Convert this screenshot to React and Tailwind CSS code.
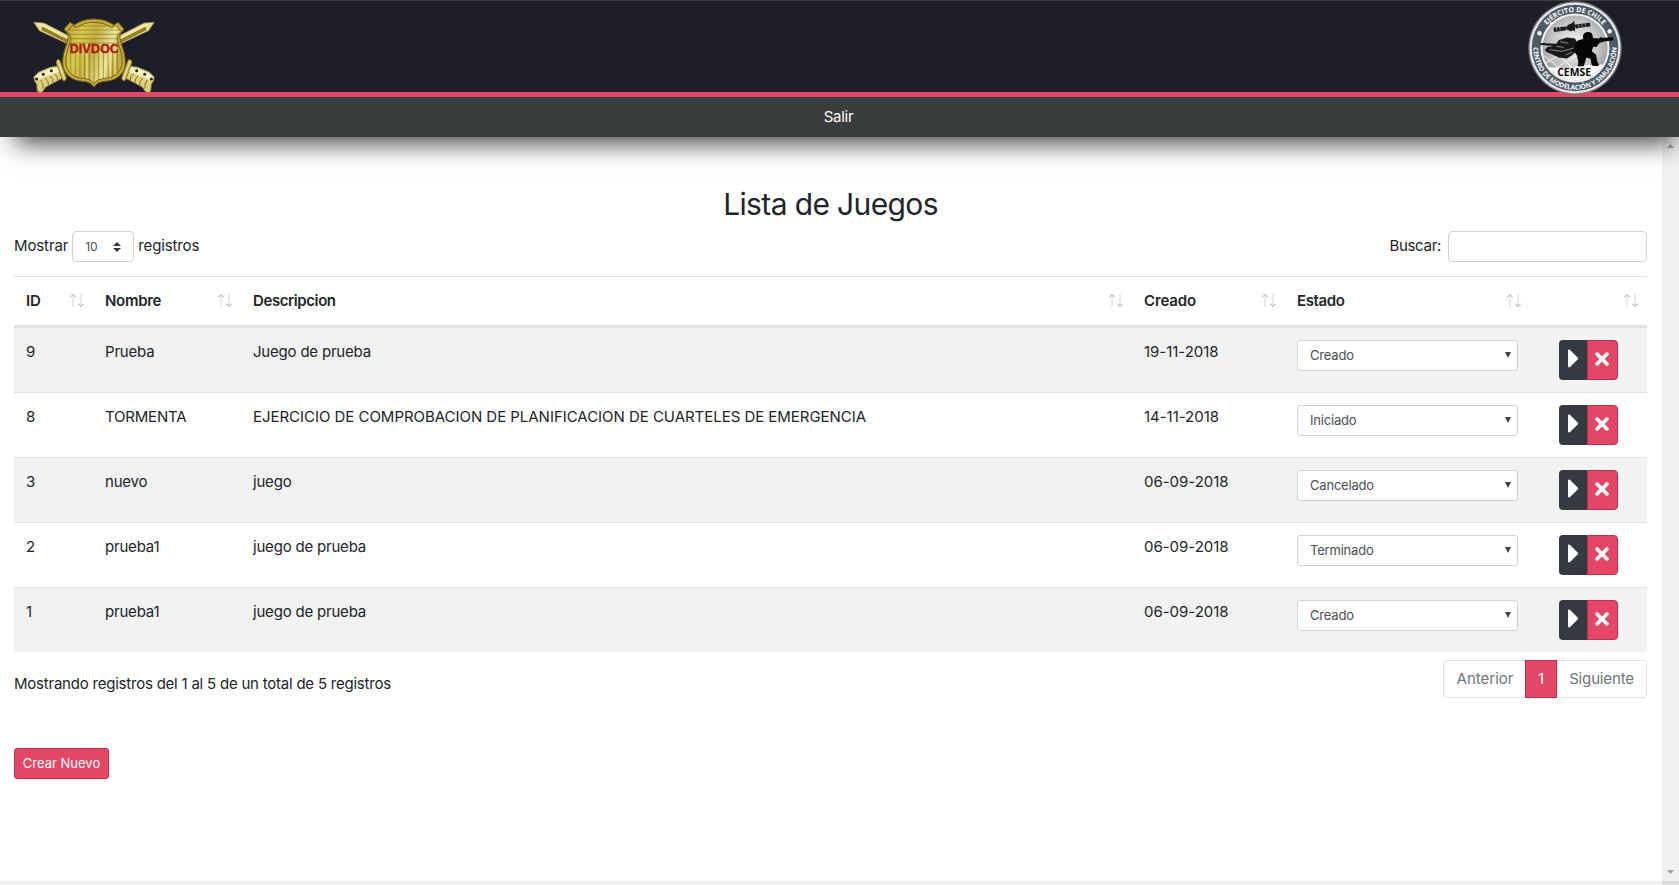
import { FaCaretRight, FaTimes } from "react-icons/fa";

const rows = [
  { id: "9", nombre: "Prueba", desc: "Juego de prueba", creado: "19-11-2018", estado: "Creado" },
  {
    id: "8",
    nombre: "TORMENTA",
    desc: "EJERCICIO DE COMPROBACION DE PLANIFICACION DE CUARTELES DE EMERGENCIA",
    creado: "14-11-2018",
    estado: "Iniciado",
    descClass: "tracking-[-0.035px]",
  },
  { id: "3", nombre: "nuevo", desc: "juego", creado: "06-09-2018", estado: "Cancelado" },
  { id: "2", nombre: "prueba1", desc: "juego de prueba", creado: "06-09-2018", estado: "Terminado" },
  { id: "1", nombre: "prueba1", desc: "juego de prueba", creado: "06-09-2018", estado: "Creado" },
];

const columns = [
  { label: "ID", className: "tracking-[-0.2px]" },
  { label: "Nombre", className: "tracking-[-0.3px]" },
  { label: "Descripcion", className: "tracking-[-0.4px]" },
  { label: "Creado", className: "tracking-[-0.15px]" },
  { label: "Estado", className: "tracking-[-0.4px]" },
  { label: "", className: "" },
];

function Sword() {
  return (
    <g>
      <path d="M101 67 L132 69 L212 110 L208 134 L118 92 Z" fill="#e9dc8c" stroke="#8d8558" strokeWidth="2" />
      <path d="M104 69 L132 72 L210 113 L209 118 L130 82 Z" fill="#f0e7a4" />
      <path d="M128 82 L206 122 L204 128 L126 89 Z" fill="#a98a1c" stroke="#5a4a10" strokeWidth="2" />
      <path
        d="M184 196 L150 202 L116 216 L101 231 L104 244 L110 252 L112 274 L122 278 L130 272 L136 262 L192 232 Z"
        fill="#ddd17a"
        stroke="#8d8558"
        strokeWidth="2"
      />
      <path d="M178 202 L148 206 L118 220 L105 231 L110 242 L140 228 L184 214 Z" fill="#f6f0c6" />
      <path
        d="M122 240 q10 12 7 26 M136 234 q12 12 9 23 M150 228 q12 10 9 22 M164 221 q12 10 9 21"
        fill="none"
        stroke="#6f5d18"
        strokeWidth="2.5"
      />
      <circle cx="154" cy="212" r="4.500" fill="#16331c" />
      <circle cx="130" cy="223" r="4.500" fill="#16331c" />
      <circle cx="110" cy="237" r="4.500" fill="#16331c" />
      <path
        d="M172 179 q6 -3 9 4 L199 232 q1 9 -6 11 q-5 0 -7 -6 L168 188 q0 -6 4 -9 Z"
        fill="#cdbb52"
        stroke="#6b5c1a"
        strokeWidth="2"
      />
      <path d="M174 184 L194 238" stroke="#f5edb5" strokeWidth="3" />
    </g>
  );
}

function DivdocLogo() {
  const shield =
    "M282 57 C255 57 236 66 223 75 L210 67 L192 87 L204 104 C207 126 188 150 188 187 C188 226 220 243 248 244 C264 245 274 250 282 261 C290 250 300 245 316 244 C344 243 376 226 376 187 C376 150 357 126 360 104 L372 87 L354 67 L341 75 C328 66 309 57 282 57 Z";
  return (
    <svg viewBox="96 48 372 234" className="h-[78px] w-[124px] shrink-0">
      <defs>
        <linearGradient id="gold" x1="0" x2="1" y1="0" y2="0.3">
          <stop offset="0" stopColor="#b9a136" />
          <stop offset="0.3" stopColor="#d8c94f" />
          <stop offset="0.55" stopColor="#c3b040" />
          <stop offset="0.85" stopColor="#ede59a" />
          <stop offset="1" stopColor="#c2ac3e" />
        </linearGradient>
        <clipPath id="shieldClip">
          <path d={shield} transform="translate(282 158) scale(0.89) translate(-282 -158)" />
        </clipPath>
      </defs>
      <Sword />
      <g transform="translate(564 0) scale(-1 1)">
        <Sword />
      </g>
      <path d={shield} fill="#c4ab38" stroke="#6e5d1c" strokeWidth="3" />
      <path
        d={shield}
        fill="url(#gold)"
        stroke="#54470f"
        strokeWidth="2.5"
        transform="translate(282 158) scale(0.9) translate(-282 -158)"
      />
      <g clipPath="url(#shieldClip)">
        <path d="M190 78h190M190 90h190M190 103h190M190 116h190M190 129h190" stroke="#85751f" strokeWidth="2" />
        <path
          d="M212 130v130M226 130v130M240 130v130M254 130v130M268 130v130M282 130v130M296 130v130M310 130v130M324 130v130M338 130v130M352 130v130"
          stroke="#85751f"
          strokeWidth="2"
        />
        <path d="M261 130v130M303 130v130M331 130v130M345 130v130" stroke="#eee69a" strokeWidth="3" />
      </g>
      <text
        x="209"
        y="159"
        textLength="148"
        lengthAdjust="spacingAndGlyphs"
        fill="#b5140f"
        stroke="#b5140f"
        strokeWidth="0.8"
        className="font-['Liberation_Sans',sans-serif] text-[37px] font-bold tracking-normal"
      >
        DIVDOC
      </text>
    </svg>
  );
}

function CemseLogo() {
  return (
    <svg viewBox="0 0 280 280" className="h-[94px] w-[94px] shrink-0">
      <defs>
        <radialGradient id="disc" cx="0.5" cy="0.45" r="0.6">
          <stop offset="0" stopColor="#f4f4f4" />
          <stop offset="0.6" stopColor="#c4c5c7" />
          <stop offset="1" stopColor="#8f9194" />
        </radialGradient>
        <clipPath id="discClip">
          <circle cx="140" cy="140" r="97" />
        </clipPath>
        <path id="arcTop" d="M33 140 A107 107 0 0 1 247 140" />
        <path id="arcBottom" d="M18 118 A124 124 0 1 0 262 118" />
      </defs>
      <circle cx="140" cy="140" r="139" fill="#7d8084" />
      <circle cx="140" cy="140" r="135" fill="#e9eaeb" />
      <circle cx="140" cy="140" r="129" fill="#4b5a66" />
      <circle cx="140" cy="140" r="103" fill="#f2f2f2" />
      <circle cx="140" cy="140" r="97" fill="url(#disc)" />
      <g clipPath="url(#discClip)">
        <path d="M44 190 L110 150 M60 214 L150 160 M44 160 L120 220 M80 150 L150 215" stroke="#eeeeee" strokeWidth="3" />
        <path d="M30 190 Q90 206 140 196 T250 190 V250 H30 Z" fill="#fbfbfb" />
      </g>
      <g fill="#16181a">
        <path d="M76 80 L112 76 L114 87 L78 92 Z M140 70 L184 65 L186 75 L142 82 Z" />
        <path d="M112 78 L122 70 L134 64 L141 74 L140 84 L128 90 L116 86 Z" />
        <path d="M134 60 l4 0 l2 30 l-4 0 Z" />
        <path d="M36 127 L40 125 L84 127 L92 116 L116 109 L140 112 L146 122 L142 134 L146 142 L136 158 L116 171 L92 168 L56 152 L50 146 L58 137 L76 134 L38 131 Z" />
      </g>
      <path
        d="M86 88 l-2 -10 M96 87 l-2 -10 M152 79 l-2 -10 M162 78 l-2 -10 M172 76 l-2 -10"
        stroke="#bdbec0"
        strokeWidth="2"
      />
      <path
        d="M64 145 L102 150 L136 140 M96 121 L120 126 M84 135 L106 138 M112 161 L130 153"
        fill="none"
        stroke="#b4b6b8"
        strokeWidth="2.2"
      />
      <path
        d="M164 106 C164 91 184 88 191 98 L194 110 L212 112 L216 107 L224 110 L252 107 L255 117 L226 121 L212 126 L204 137 L194 136 L190 150 L203 160 L206 180 L212 190 L206 194 L190 192 L186 172 L174 168 L166 194 L148 194 L150 182 L146 162 L138 152 L139 132 L148 118 L164 113 Z"
        fill="#050505"
      />
      <circle cx="34" cy="96" r="6.5" fill="#ffffff" />
      <circle cx="243" cy="90" r="6.5" fill="#ffffff" />
      <text
        x="87"
        y="222"
        textLength="101"
        lengthAdjust="spacingAndGlyphs"
        fill="#0a0a0a"
        className="font-['Open_Sans',sans-serif] text-[32px] font-bold tracking-normal"
      >
        CEMSE
      </text>
      <text fill="#ffffff" className="font-['Open_Sans',sans-serif] text-[21px] font-bold tracking-normal">
        <textPath href="#arcTop" startOffset="50%" textAnchor="middle" textLength="190" lengthAdjust="spacingAndGlyphs">
          EJÉRCITO DE CHILE
        </textPath>
      </text>
      <text fill="#ffffff" className="font-['Open_Sans',sans-serif] text-[20px] font-bold tracking-normal">
        <textPath href="#arcBottom" startOffset="50%" textAnchor="middle" textLength="394" lengthAdjust="spacingAndGlyphs">
          CENTRO DE MODELACIÓN Y SIMULACIÓN
        </textPath>
      </text>
    </svg>
  );
}

function SortArrows() {
  return (
    <svg viewBox="0 0 14 13" className="absolute top-[17px] right-[9px] h-[13px] w-[14px]" fill="none">
      <path d="M3 1v12M11 0v12" stroke="#e6e6e6" strokeWidth="1.6" />
      <path d="M0.3 3.2L3 0.6l2.700 2.600M8.300 9.800L11 12.400l2.700-2.600" stroke="#c4c4c4" strokeWidth="1.2" />
    </svg>
  );
}

function EstadoSelect({ value }) {
  return (
    <div className="flex h-[31px] w-[221px] items-center justify-between rounded-[3px] border border-[#ced4da] bg-white pr-1.5 pb-px pl-3 text-[13px] text-[#495057]">
      <span>{value}</span>
      <svg viewBox="0 0 6 6" className="h-1.5 w-1.5">
        <path d="M0 0h6L3 6z" fill="#3c4349" />
      </svg>
    </div>
  );
}

export default function App() {
  return (
    <div className="flex h-[885px] w-full flex-col overflow-hidden bg-white font-['Inter',sans-serif] text-[15px] leading-6 tracking-[-0.2px] text-[#212529]">
      <div className="relative z-10 shrink-0 shadow-[5px_16px_24px_-10px_rgba(0,0,0,0.75)]">
        <header className="flex h-[97px] items-start justify-between border-t border-b-[5px] border-t-[#3a3d3d] border-b-[#e44765] bg-[#1e1e28] pr-[57px] pl-8">
          <div className="pt-[15px]">
            <DivdocLogo />
          </div>
          <CemseLogo />
        </header>
        <nav className="flex h-10 items-center justify-center bg-[#3a3d3d] pr-0.5 text-white">
          <a className="tracking-[-0.3px]">Salir</a>
        </nav>
      </div>

      <div className="flex min-h-0 flex-1">
        <main className="flex-1 pt-12 pr-[15px] pl-3.5">
          <h2 className="mb-2 text-center text-[30px] leading-[38px] tracking-[-0.63px]">Lista de Juegos</h2>

          <div className="flex items-center justify-between">
            <label className="flex items-center gap-1">
              <span className="pb-0.5 tracking-[-0.12px]">Mostrar</span>
              <span className="flex h-[31px] w-[62px] items-center justify-between rounded border border-[#ced4da] pr-3 pl-3 text-[12px] text-[#495057]">
                10
                <svg viewBox="0 0 4 5" className="h-2.5 w-2">
                  <path fill="#343a40" d="M2 0L0 2h4zm0 5L0 3h4z" />
                </svg>
              </span>
              <span className="pb-0.5 tracking-[-0.12px]">registros</span>
            </label>
            <label className="flex items-center gap-[7px]">
              <span className="pb-0.5 tracking-[-0.3px]">Buscar:</span>
              <span className="h-[31px] w-[199px] rounded border border-[#ced4da]" />
            </label>
          </div>

          <table className="mt-3.5 w-[1633px] table-fixed border-separate border-spacing-0">
            <colgroup>
              <col className="w-[79px]" />
              <col className="w-[148px]" />
              <col className="w-[891px]" />
              <col className="w-[153px]" />
              <col className="w-[245px]" />
              <col className="w-[117px]" />
            </colgroup>
            <thead>
              <tr className="h-[52px]">
                {columns.map((c, i) => (
                  <th
                    key={i}
                    className="relative border-t border-b-3 border-[#dee2e6] px-3 py-0 text-left align-middle font-semibold"
                  >
                    <span className={c.className}>{c.label}</span>
                    <SortArrows />
                  </th>
                ))}
              </tr>
            </thead>
            <tbody className="[&>tr+tr>td]:border-t [&>tr+tr>td]:border-[#dee2e6]">
              {rows.map((r, i) => (
                <tr key={r.id} className={i % 2 === 0 ? "bg-[#f2f2f2] align-top" : "align-top"}>
                  <td className="p-3">{r.id}</td>
                  <td className="p-3">{r.nombre}</td>
                  <td className="p-3">
                    <span className={r.descClass}>{r.desc}</span>
                  </td>
                  <td className="p-3 tracking-[-0.03px]">{r.creado}</td>
                  <td className="p-3">
                    <EstadoSelect value={r.estado} />
                  </td>
                  <td className="p-3">
                    <div className="flex h-10 justify-center text-white">
                      <button className="flex w-7 items-center justify-center rounded-l bg-[#343a40] pb-[3px] pl-px">
                        <FaCaretRight className="h-[31px] w-[11.600px]" />
                      </button>
                      <button className="flex w-[31px] items-center justify-center rounded-r border border-[#b9304a] bg-[#e44765] pr-px pb-0.5">
                        <FaTimes className="h-5 w-3.5" />
                      </button>
                    </div>
                  </td>
                </tr>
              ))}
            </tbody>
          </table>

          <div className="flex items-start justify-between pt-2">
            <p className="pt-3 tracking-[-0.22px]">Mostrando registros del 1 al 5 de un total de 5 registros</p>
            <div className="flex h-[38px] text-[#6c757d]">
              <button className="w-[82px] rounded-l border border-r-0 border-[#dee2e6] pl-px tracking-normal">Anterior</button>
              <button className="w-8 border border-[#b9304a] bg-[#e44765] text-white">1</button>
              <button className="w-[90px] rounded-r border border-l-0 border-[#dee2e6] tracking-[-0.15px]">Siguiente</button>
            </div>
          </div>

          <button className="mt-[50px] h-[31px] w-[95px] rounded-[3px] border border-[#b9304a] bg-[#e44765] text-[13px] leading-none tracking-normal text-white">
            Crear Nuevo
          </button>
        </main>

        <aside className="flex w-[17px] flex-col items-center justify-between bg-[#f0f0f0] py-[7px]">
          <svg viewBox="0 0 7 4" className="h-1 w-[7px]">
            <path d="M3.500 0L7 4H0z" fill="#a0a0a0" />
          </svg>
          <svg viewBox="0 0 7 4" className="h-1 w-[7px]">
            <path d="M0 0h7L3.500 4z" fill="#a0a0a0" />
          </svg>
        </aside>
      </div>
      <footer className="flex h-1 shrink-0 justify-end bg-[#f0f0f0]">
        <span className="w-[17px] bg-[#dcdcdc]" />
      </footer>
    </div>
  );
}
